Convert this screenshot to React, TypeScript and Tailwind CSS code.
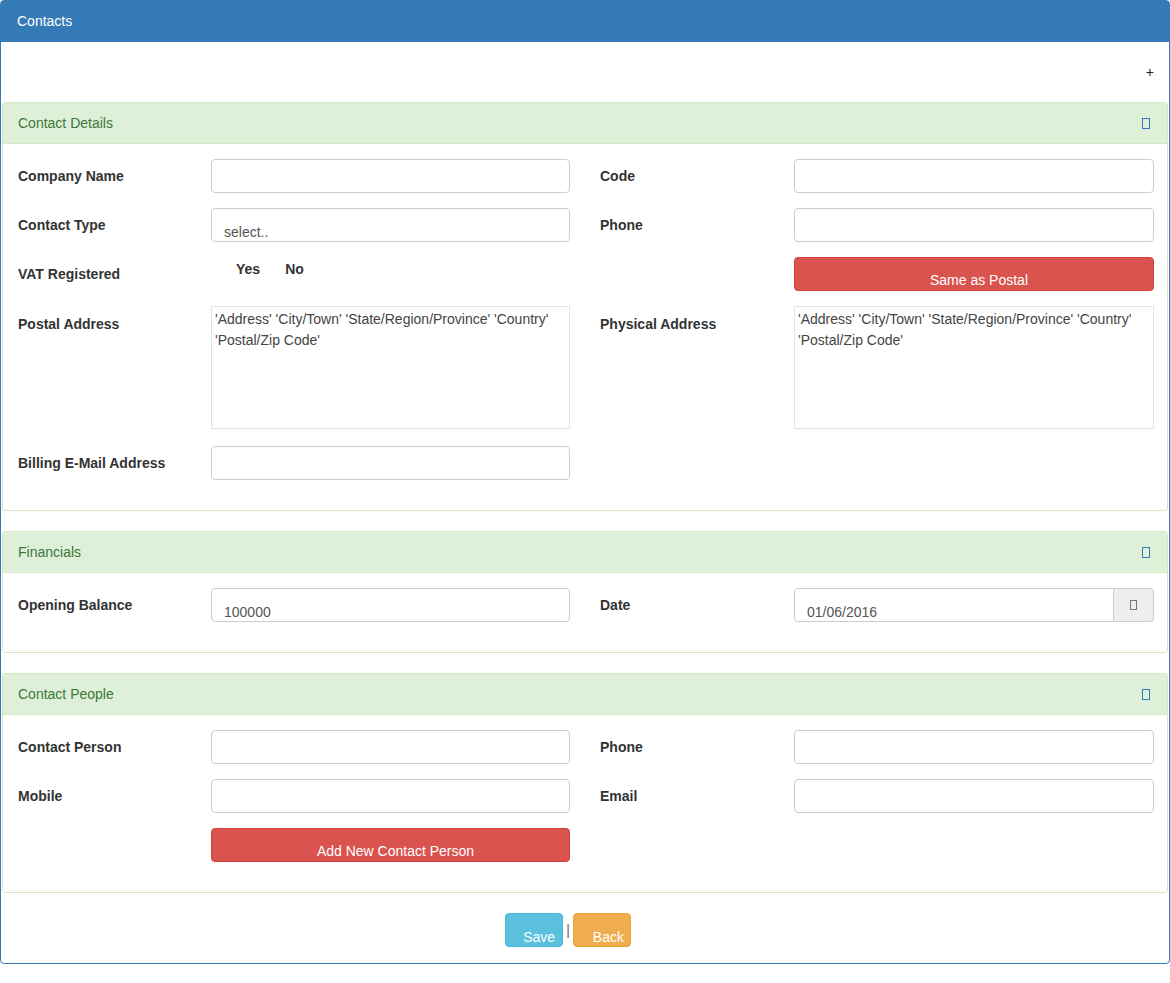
import React from 'react';

const font = { fontFamily: '"Liberation Sans", Arial, sans-serif' };

function Tofu({ className }: { className: string }) {
  return <span className={`inline-block border ${className}`} />;
}

function Section({ title, children }: { title: string; children: React.ReactNode }) {
  return (
    <div className="mx-[1px] mb-[20px] rounded-[3px] border border-[#d6e9c6] bg-white">
      <div className="flex h-[41px] items-center justify-between rounded-t-[3px] border-b border-[#d6e9c6] bg-[#dff0d8] pl-[15px] pr-[17px] text-[14px] text-[#3c763d]">
        <span>{title}</span>
        <Tofu className="h-[11px] w-[8px] border-[#337ab7]" />
      </div>
      <div className="px-[15px] pb-[15px] pt-[15px]">{children}</div>
    </div>
  );
}

function Row({
  label,
  children,
  top,
  right,
  className = 'mb-[15px]',
}: {
  label?: string;
  children?: React.ReactNode;
  top?: boolean;
  right?: boolean;
  className?: string;
}) {
  return (
    <div className={`flex ${className} ${top ? 'items-start' : 'items-center'}`}>
      <div
        className={`${right ? 'w-[194px]' : 'w-[193px]'} shrink-0 text-[14px] font-bold text-[#333] ${top ? 'pt-[8px]' : ''}`}
      >
        {label}
      </div>
      <div className="min-w-0 flex-1">{children}</div>
    </div>
  );
}

function Input({ value }: { value?: string }) {
  return (
    <div className="h-[34px] rounded-[4px] border border-[#ccc] bg-white pl-[12px] pt-[13px] text-[14px] leading-[20px] text-[#555]">
      {value}
    </div>
  );
}

function RedButton({ label }: { label: string }) {
  return (
    <div className="h-[34px] rounded-[4px] border border-[#d43f3a] bg-[#d9534f] pl-[10px] pt-[12px] text-center text-[14px] leading-[20px] text-white">
      {label}
    </div>
  );
}

function Address() {
  return (
    <div className="h-[123px] border border-[#e3e3e3] bg-white px-[3px] pt-[2px] text-[14px] leading-[21px] text-[#444]">
      'Address' 'City/Town' 'State/Region/Province' 'Country' 'Postal/Zip Code'
    </div>
  );
}

function Grid({ children }: { children: React.ReactNode }) {
  return <div className="grid grid-cols-[552px_554px] gap-x-[30px]">{children}</div>;
}

export default function App() {
  return (
    <div className="min-h-[983px] bg-white" style={font}>
      <div className="w-[1170px] rounded-[4px] border border-[#337ab7] bg-white">
        {/* Panel heading */}
        <div className="flex h-[41px] items-center bg-[#337ab7] px-[16px] text-[14px] text-white">Contacts</div>

        <div className="flex h-[60px] items-center justify-end pr-[15px] text-[14px] text-[#222]">+</div>

        <Section title="Contact Details">
          <Grid>
            <div>
              <Row label="Company Name"><Input /></Row>
              <Row label="Contact Type"><Input value="select.." /></Row>
              <Row label="VAT Registered">
                <div className="flex h-[34px] items-start gap-[25px] pl-[25px] pt-[2px] text-[14px] font-bold text-[#333]">
                  <span>Yes</span>
                  <span>No</span>
                </div>
              </Row>
              <Row label="Postal Address" top className="mb-[17px]"><Address /></Row>
              <Row label="Billing E-Mail Address"><Input /></Row>
            </div>
            <div>
              <Row right label="Code"><Input /></Row>
              <Row right label="Phone"><Input /></Row>
              <Row right><RedButton label="Same as Postal" /></Row>
              <Row right label="Physical Address" top className="mb-[17px]"><Address /></Row>
            </div>
          </Grid>
        </Section>

        <Section title="Financials">
          <Grid>
            <div>
              <Row label="Opening Balance"><Input value="100000" /></Row>
            </div>
            <div>
              <Row right label="Date">
                <div className="flex h-[34px]">
                  <div className="h-full flex-1 rounded-l-[4px] border border-[#ccc] pl-[12px] pt-[13px] text-[14px] leading-[20px] text-[#555]">
                    01/06/2016
                  </div>
                  <div className="flex w-[40px] items-center justify-center rounded-r-[4px] border border-l-0 border-[#ccc] bg-[#eee]">
                    <Tofu className="h-[10px] w-[7px] border-[#777]" />
                  </div>
                </div>
              </Row>
            </div>
          </Grid>
        </Section>

        <Section title="Contact People">
          <Grid>
            <div>
              <Row label="Contact Person"><Input /></Row>
              <Row label="Mobile"><Input /></Row>
              <Row><RedButton label="Add New Contact Person" /></Row>
            </div>
            <div>
              <Row right label="Phone"><Input /></Row>
              <Row right label="Email"><Input /></Row>
            </div>
          </Grid>
        </Section>

        <div className="flex items-center justify-center gap-[3px] pb-[16px] pr-[34px]">
          <div className="h-[34px] w-[58px] rounded-[4px] border border-[#46b8da] bg-[#5bc0de] pl-[17px] pt-[13px] text-[14px] leading-[20px] text-white">
            Save
          </div>
          <span className="text-[14px] text-[#666]">|</span>
          <div className="h-[34px] w-[58px] rounded-[4px] border border-[#eea236] bg-[#f0ad4e] pl-[19px] pt-[13px] text-[14px] leading-[20px] text-white">
            Back
          </div>
        </div>
      </div>
    </div>
  );
}
